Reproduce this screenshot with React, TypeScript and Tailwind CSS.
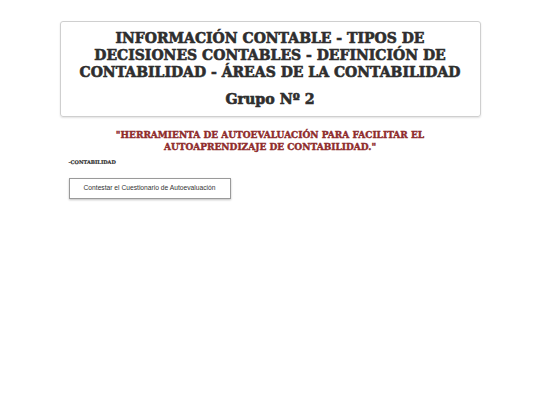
export default function App() {
  const slab = { fontFamily: '"DejaVu Serif", "Liberation Serif", serif' };

  return (
    <div className="min-h-[405px] w-full bg-white">
      <div className="mx-auto w-[421px] pt-[21px]">
        {/* Header card */}
        <div
          className="rounded-[3px] border border-[#cfcfcf] px-2 pt-[7.5px] pb-[8px] text-center text-[#2e2e2e] shadow-[0_1px_2px_rgba(0,0,0,0.12)]"
          style={slab}
        >
          <h1 className="whitespace-nowrap text-[14px] font-bold leading-[17px] [-webkit-text-stroke:0.6px_#2e2e2e]">
            INFORMACIÓN CONTABLE - TIPOS DE
            <br />
            DECISIONES CONTABLES - DEFINICIÓN DE
            <br />
            CONTABILIDAD - ÁREAS DE LA CONTABILIDAD
          </h1>
          <h2 className="mt-[10px] text-[14.2px] font-bold leading-[17px] [-webkit-text-stroke:0.6px_#2e2e2e]">
            Grupo Nº 2
          </h2>
        </div>

        {/* Quote */}
        <p
          className="mt-[12px] whitespace-nowrap text-center text-[9px] font-bold leading-[12px] text-[#8f2c2c] [-webkit-text-stroke:0.4px_#8f2c2c]"
          style={slab}
        >
          "HERRAMIENTA DE AUTOEVALUACIÓN PARA FACILITAR EL
          <br />
          AUTOAPRENDIZAJE DE CONTABILIDAD."
        </p>

        <div className="px-[9px]">
          <p
            className="mt-[6px] text-[5px] font-bold leading-[6px] text-[#333333] [-webkit-text-stroke:0.2px_#333333]"
            style={slab}
          >
            -CONTABILIDAD
          </p>

          <button
            type="button"
            className="mt-[13px] h-[21px] w-[162px] border border-[#9a9a9a] bg-white text-[6.7px] text-[#333333] shadow-[0_1px_2px_rgba(0,0,0,0.25)]"
            style={{ fontFamily: '"Liberation Sans", Arial, sans-serif' }}
          >
            Contestar el Cuestionario de Autoevaluación
          </button>
        </div>
      </div>
    </div>
  );
}
